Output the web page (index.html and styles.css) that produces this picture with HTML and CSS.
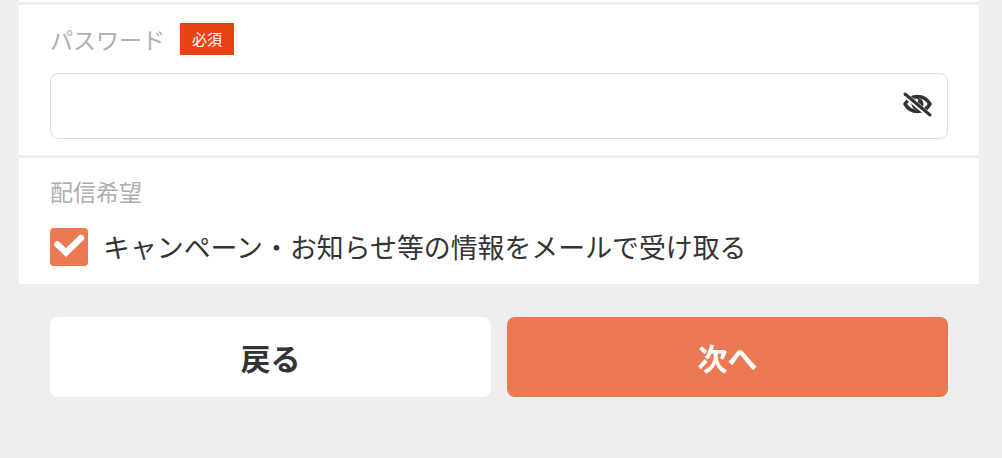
FILE: index.html
```html
<!DOCTYPE html>
<html lang="ja">
<head>
    <meta charset="UTF-8">
    <meta name="viewport" content="width=device-width, initial-scale=1.0">
    <title>パスワード</title>
    <link rel="stylesheet" href="styles.css">
</head>
<body>
    <div class="form">
        <div class="top-edge"></div>

        <!-- パスワード -->
        <div class="section section-password">
            <div class="label-row">
                <span class="label">パスワード</span>
                <span class="required">必須</span>
            </div>
            <div class="input">
                <svg class="eye" viewBox="0 2 30 26" width="30" height="26">
                    <path d="M3 13C6 8 10 5.500 15.500 5.500S25 8 28 13c-3 5-7 7.500-12.500 7.500S6 18 3 13z" fill="none" stroke="#333" stroke-width="3.500" stroke-linejoin="round"/>
                    <circle cx="15.500" cy="13" r="6" fill="#333"/>
                    <circle cx="14.500" cy="9.500" r="1.800" fill="#fff"/>
                    <path d="M2 3l26 22" stroke="#fff" stroke-width="5.500" fill="none"/>
                    <path d="M3 3l25 21" stroke="#333" stroke-width="3" stroke-linecap="round" fill="none"/>
                </svg>
            </div>
        </div>

        <!-- 配信希望 -->
        <div class="section section-mail">
            <div class="label">配信希望</div>
            <div class="check-row">
                <span class="checkbox">
                    <svg viewBox="0 0 38 38" width="38" height="38">
                        <path d="M7.500 16.500l8.500 8L31 10" stroke="#fff" stroke-width="6.500" stroke-linecap="round" fill="none"/>
                    </svg>
                </span>
                <span class="check-text">キャンペーン・お知らせ等の情報をメールで受け取る</span>
            </div>
        </div>
    </div>

    <div class="buttons">
        <button class="btn btn-back">戻る</button>
        <button class="btn btn-next">次へ</button>
    </div>
</body>
</html>
```

FILE: styles.css
```css
body {
    margin: 0;
    height: 458px;
    overflow: hidden;
    background: #eeeeee;
    font-family: "Noto Sans CJK JP", "Noto Sans", sans-serif;
}

.form {
    width: 960px;
    margin-left: 19px;
}

.top-edge {
    height: 2px;
    background: #fff;
}

.section {
    background: #fff;
    padding: 0 31px;
    margin-top: 3px;
}

.section-password {
    height: 150px;
    padding-top: 18px;
    box-sizing: border-box;
}

.section-mail {
    height: 126px;
    padding-top: 19px;
    box-sizing: border-box;
}

.label-row {
    display: flex;
    align-items: center;
    height: 32px;
}

.label {
    font-size: 23px;
    line-height: 32px;
    color: #aeaeae;
}

.section-mail .label {
    margin-top: -2px;
}

.required {
    margin-left: 15px;
    width: 54px;
    height: 32px;
    line-height: 32px;
    text-align: center;
    font-size: 15px;
    color: #fff;
    background: #e84315;
}

.input {
    display: flex;
    align-items: center;
    justify-content: flex-end;
    height: 66px;
    margin-top: 18px;
    padding-right: 15px;
    box-sizing: border-box;
    border: 1px solid #dddddd;
    border-radius: 8px;
}

.eye {
    overflow: visible;
}

.check-row {
    display: flex;
    align-items: center;
    margin-top: 21px;
}

.checkbox {
    display: block;
    width: 38px;
    height: 38px;
    border-radius: 4px;
    background: #eb7953;
}

.checkbox svg {
    display: block;
}

.check-text {
    margin-left: 15px;
    font-size: 26.900px;
    line-height: 38px;
    color: #333;
}

.buttons {
    display: flex;
    gap: 16px;
    margin: 33px 54px 0 50px;
}

.btn {
    flex: 1;
    height: 80px;
    padding: 0;
    border: none;
    border-radius: 8px;
    font-family: inherit;
    font-size: 30px;
    font-weight: 700;
}

.btn-back {
    background: #fff;
    color: #333;
}

.btn-next {
    background: #eb7953;
    color: #fff;
}
```
